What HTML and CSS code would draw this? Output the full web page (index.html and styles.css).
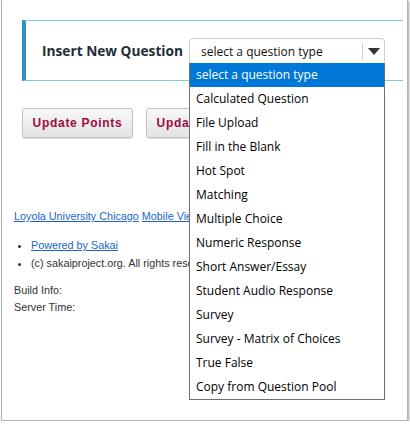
FILE: index.html
```html
<!DOCTYPE html>
<html>
<head>
<meta charset="utf-8">
<link rel="stylesheet" href="styles.css">
</head>
<body>
<div class="frame">
  <div class="panel">
    <span class="panel-title">Insert New Question</span>
    <div class="select-wrap">
      <div class="select">
        <span class="select-text">select a question type</span>
        <span class="select-arrow"><svg width="12" height="7" viewBox="0 0 12 7"><path d="M0 0h12L6 7z" fill="#333"/></svg></span>
      </div>
      <ul class="options">
        <li class="selected">select a question type</li>
        <li>Calculated Question</li>
        <li>File Upload</li>
        <li>Fill in the Blank</li>
        <li>Hot Spot</li>
        <li>Matching</li>
        <li>Multiple Choice</li>
        <li>Numeric Response</li>
        <li>Short Answer/Essay</li>
        <li>Student Audio Response</li>
        <li>Survey</li>
        <li>Survey - Matrix of Choices</li>
        <li>True False</li>
        <li>Copy from Question Pool</li>
      </ul>
    </div>
  </div>
  <div class="buttons">
    <button class="btn">Update Points</button>
    <button class="btn">Update Points</button>
  </div>
  <div class="footer">
    <div class="footer-links"><a href="#">Loyola University Chicago</a> <a href="#">Mobile View</a></div>
    <ul class="footer-list">
      <li><a href="#">Powered by Sakai</a></li>
      <li>(c) sakaiproject.org. All rights reserved.</li>
    </ul>
    <div class="info">Build Info:</div>
    <div class="info">Server Time:</div>
  </div>
</div>
</body>
</html>
```
FILE: styles.css
```css
html, body { margin: 0; padding: 0; background: #fff; }
body { font-family: "Liberation Sans", Arial, sans-serif; overflow: hidden; }
.frame {
  width: 405px;
  height: 420px;
  margin-left: 1px;
  border: 1px solid #b5b5b5;
  border-top: none;
  box-shadow: 1px 1px 2px rgba(0,0,0,0.35);
  overflow: hidden;
  position: relative;
}
.panel {
  margin: 20px 4px 0 20px;
  height: 59px;
  border-top: 1px solid #7fcbe5;
  border-bottom: 1px solid #7fcbe5;
  border-left: 4px solid #2b93c1;
  display: flex;
  align-items: center;
  padding-left: 16px;
}
.panel-title {
  font-family: "Open Sans", sans-serif;
  font-weight: 700;
  font-size: 13.7px;
  color: #1e2d3b;
  width: 147px;
}
.select-wrap { position: relative; }
.select {
  width: 194px;
  height: 25px;
  border: 1px solid #cfcfcf;
  border-radius: 4px;
  display: flex;
  align-items: center;
  box-sizing: content-box;
  margin-top: 1px;
}
.select-text {
  flex: 1;
  font-family: "Open Sans", sans-serif;
  font-size: 12px;
  color: #111;
  padding-left: 11px;
}
.select-arrow {
  width: 21px;
  height: 17px;
  border-left: 1px solid #cfcfcf;
  display: flex;
  align-items: center;
  justify-content: center;
}
.options {
  position: absolute;
  left: 0;
  top: 26px;
  width: 194px;
  margin: 0;
  padding: 0;
  list-style: none;
  border: 1px solid #6e6e6e;
  border-top: none;
  background: #fff;
  z-index: 5;
}
.options li {
  height: 24px;
  line-height: 24px;
  padding-left: 6px;
  font-family: "Open Sans", sans-serif;
  font-size: 12px;
  color: #000;
}
.options li.selected { background: #0078d7; color: #fff; }
.buttons {
  display: flex;
  gap: 13px;
  margin: 27px 0 0 20px;
}
.btn {
  width: 111px;
  height: 30px;
  border: 1px solid #c4c4c4;
  border-radius: 3px;
  background: linear-gradient(#f8f8f8, #e3e3e3);
  box-shadow: 0 1px 1px rgba(0,0,0,0.15);
  font-family: "Liberation Sans", Arial, sans-serif;
  font-weight: 700;
  font-size: 12px;
  letter-spacing: 0.7px;
  color: #9d0b3f;
  padding: 0;
}
.footer {
  margin: 72px 0 0 12px;
  font-size: 10.8px;
  color: #333;
}
.footer a { color: #1a64c8; text-decoration: underline; }
.footer-links { white-space: nowrap; }
.footer-list {
  margin: 14px 0 10px 0;
  padding-left: 17px;
}
.footer-list li { line-height: 18px; white-space: nowrap; }
.info { line-height: 17px; }
```
